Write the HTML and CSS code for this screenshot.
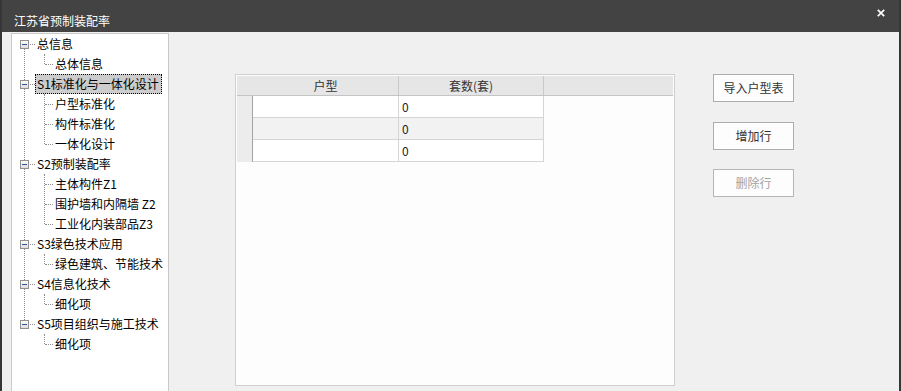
FILE: index.html
```html
<!DOCTYPE html>
<html>
<head>
    <meta charset="utf-8">
    <title>江苏省预制装配率</title>
    <link rel="stylesheet" href="styles.css">
</head>
<body>
  <div class="window">
    <div class="title_bar">
      <span class="title_text">江苏省预制装配率</span>
      <span class="close_btn">
        <svg width="8" height="8" viewBox="0 0 8 8"><path d="M0.8 0.8L7.2 7.2M7.2 0.8L0.8 7.2" stroke="#fff" stroke-width="1.7"/></svg>
      </span>
    </div>
    <div class="main">
      <div class="tree">
        <div class="tree_list">
          <div class="node"><span class="exp"></span><span class="hline"></span><span class="label">总信息</span></div>
          <div class="children">
            <div class="child"><span class="hline2"></span><span class="label">总体信息</span></div>
          </div>
          <div class="node"><span class="exp"></span><span class="hline"></span><span class="label selected">S1标准化与一体化设计</span></div>
          <div class="children">
            <div class="child"><span class="hline2"></span><span class="label">户型标准化</span></div>
            <div class="child"><span class="hline2"></span><span class="label">构件标准化</span></div>
            <div class="child"><span class="hline2"></span><span class="label">一体化设计</span></div>
          </div>
          <div class="node"><span class="exp"></span><span class="hline"></span><span class="label">S2预制装配率</span></div>
          <div class="children">
            <div class="child"><span class="hline2"></span><span class="label">主体构件Z1</span></div>
            <div class="child"><span class="hline2"></span><span class="label">围护墙和内隔墙 Z2</span></div>
            <div class="child"><span class="hline2"></span><span class="label">工业化内装部品Z3</span></div>
          </div>
          <div class="node"><span class="exp"></span><span class="hline"></span><span class="label">S3绿色技术应用</span></div>
          <div class="children">
            <div class="child"><span class="hline2"></span><span class="label">绿色建筑、节能技术</span></div>
          </div>
          <div class="node"><span class="exp"></span><span class="hline"></span><span class="label">S4信息化技术</span></div>
          <div class="children">
            <div class="child"><span class="hline2"></span><span class="label">细化项</span></div>
          </div>
          <div class="node"><span class="exp"></span><span class="hline"></span><span class="label">S5项目组织与施工技术</span></div>
          <div class="children">
            <div class="child"><span class="hline2"></span><span class="label">细化项</span></div>
          </div>
        </div>
      </div>

      <div class="grid">
        <div class="grid_head">
          <div class="corner"></div>
          <div class="head_cell col1">户型</div>
          <div class="head_cell col2">套数(套)</div>
        </div>
        <div class="grid_row">
          <div class="row_head"></div>
          <div class="cell col1"></div>
          <div class="cell col2">0</div>
        </div>
        <div class="grid_row alt">
          <div class="row_head"></div>
          <div class="cell col1"></div>
          <div class="cell col2">0</div>
        </div>
        <div class="grid_row">
          <div class="row_head"></div>
          <div class="cell col1"></div>
          <div class="cell col2">0</div>
        </div>
      </div>

      <div class="btn_box">
        <div class="btn">导入户型表</div>
        <div class="btn">增加行</div>
        <div class="btn btn_del disabled">删除行</div>
      </div>
    </div>
  </div>
</body>
</html>
```

FILE: styles.css
```css
      body{
        margin: 0;
        background-color: #f0f0f0;
        font-family: "Noto Sans CJK SC", "Noto Sans", sans-serif;
        font-size: 12px;
      }
      .window{
        height: 391px;
        box-sizing: border-box;
        border-left: 2px solid #363636;
        border-right: 2px solid #363636;
        overflow: hidden;
      }
      .title_bar{
        height: 32px;
        box-sizing: border-box;
        padding-top: 9px;
        background-color: #434343;
        display: flex;
        align-items: center;
        color: #fff;
      }
      .title_text{
        margin-left: 12px;
        font-size: 12px;
        line-height: 23px;
        margin-top: -1px;
      }
      .close_btn{
        margin-left: auto;
        margin-right: 14px;
        align-self: flex-start;
        height: 8px;
      }
      .close_btn svg{
        display: block;
      }
      .main{
        display: flex;
        align-items: flex-start;
      }

      /* tree */
      .tree{
        margin-left: 9px;
        margin-top: 1px;
        width: 158px;
        height: 400px;
        box-sizing: border-box;
        border: 1px solid #c9c9c9;
        background-color: #fff;
        flex-shrink: 0;
      }
      .tree_list{
        position: relative;
      }
      .tree_list::before{
        content: "";
        position: absolute;
        left: 12px;
        top: 10px;
        bottom: 30px;
        border-left: 1px dotted #8c8c8c;
      }
      .node, .child{
        height: 20px;
        display: flex;
        align-items: center;
        white-space: nowrap;
        color: #000;
      }
      .exp{
        position: relative;
        width: 9px;
        height: 9px;
        box-sizing: border-box;
        margin-left: 8px;
        border: 1px solid #8f8f8f;
        background: linear-gradient(#ffffff, #dcdcdc);
      }
      .exp::after{
        content: "";
        position: absolute;
        left: 1px;
        top: 3px;
        width: 5px;
        height: 1px;
        background-color: #2c4f9a;
      }
      .hline{
        width: 5px;
        margin-left: 1px;
        border-top: 1px dotted #8c8c8c;
      }
      .hline2{
        width: 8px;
        margin-left: 1px;
        border-top: 1px dotted #8c8c8c;
      }
      .label{
        height: 20px;
        line-height: 18px;
        box-sizing: border-box;
        border: 1px dotted transparent;
        padding: 0 1px;
      }
      .selected{
        background-color: #cccccc;
        border-color: #000;
        padding-right: 2px;
      }
      .children{
        position: relative;
        margin-left: 32px;
      }
      .children::before{
        content: "";
        position: absolute;
        left: 0;
        top: 0;
        bottom: 10px;
        border-left: 1px dotted #8c8c8c;
      }

      /* grid */
      .grid{
        margin-left: 66px;
        margin-top: 42px;
        width: 440px;
        height: 312px;
        box-sizing: border-box;
        border: 1px solid #cfcfcf;
        padding: 1px;
        background-color: #fdfdfd;
        flex-shrink: 0;
      }
      .grid_head{
        display: flex;
        height: 20px;
        box-sizing: border-box;
        background-color: #e6e6e6;
        border-bottom: 1px solid #c4c4c4;
        color: #333;
      }
      .corner{
        width: 16px;
      }
      .head_cell{
        box-sizing: border-box;
        border-right: 1px solid #c9c9c9;
        text-align: center;
        line-height: 19px;
      }
      .col1{
        width: 146px;
      }
      .col2{
        width: 145px;
      }
      .grid_row{
        display: flex;
        height: 22px;
      }
      .row_head{
        width: 16px;
        box-sizing: border-box;
        background-color: #ececec;
        border-right: 1px solid #a3a3a3;
      }
      .cell{
        box-sizing: border-box;
        border-right: 1px solid #d5d5d5;
        border-bottom: 1px solid #d5d5d5;
        background-color: #fff;
        line-height: 21px;
        padding-left: 3px;
        color: #222;
      }
      .alt .cell{
        background-color: #f2f2f2;
      }

      /* buttons */
      .btn_box{
        margin-left: 38px;
        margin-top: 42px;
        display: flex;
        flex-direction: column;
        gap: 20px;
      }
      .btn{
        width: 81px;
        height: 28px;
        box-sizing: border-box;
        border: 1px solid #adadad;
        background-color: #fdfdfd;
        text-align: center;
        line-height: 26px;
        font-size: 12px;
        color: #333;
      }
      .btn_del{
        margin-top: -1px;
      }
      .btn.disabled{
        color: #a3a3a3;
        border-color: #b5b5b5;
      }
```
